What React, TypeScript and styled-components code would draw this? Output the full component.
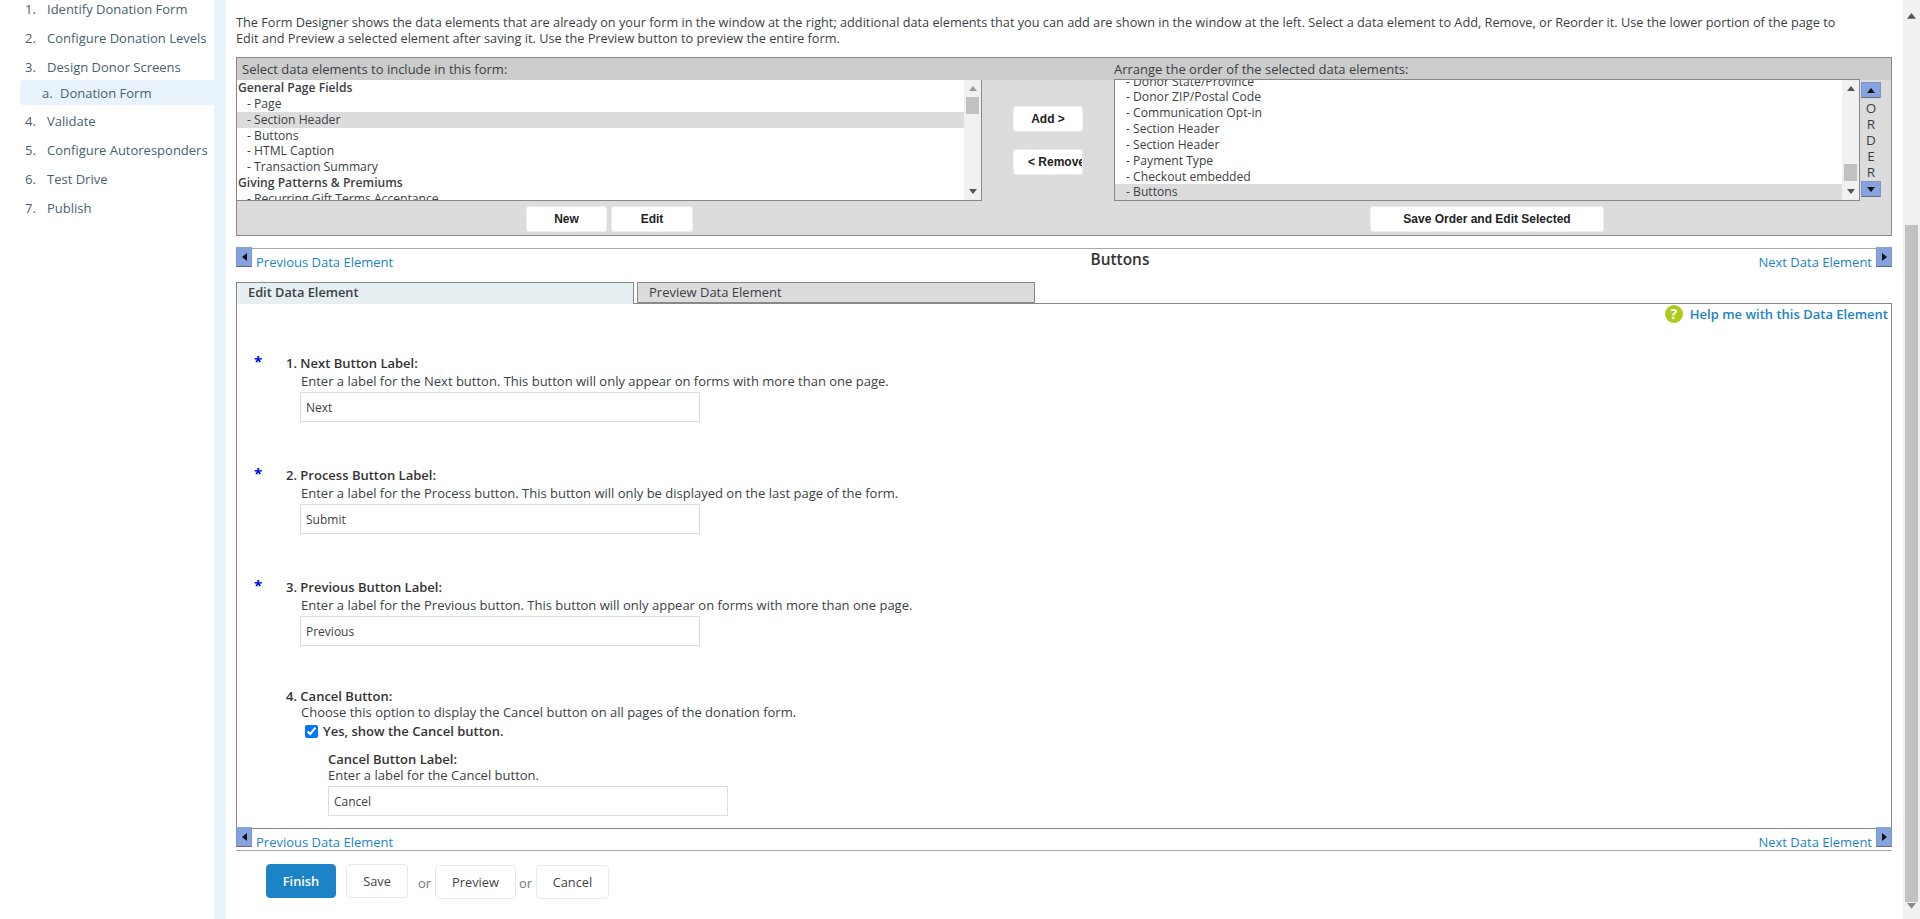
import React from "react";
import styled, { createGlobalStyle } from "styled-components";

const Global = createGlobalStyle`
  html, body { margin: 0; padding: 0; height: 100%; overflow: hidden; background: #fff; }
  body { font-family: "Open Sans", "Liberation Sans", sans-serif; font-size: 12px; color: #333; }
  * { box-sizing: border-box; }
`;

const Page = styled.div`
  display: flex;
  height: 919px;
  overflow: hidden;
`;

const Sidebar = styled.ol`
  list-style: none;
  width: 214px;
  flex: none;
  margin: -6px 0 0;
  padding: 0;
  font-size: 13px;
  color: #4a5f70;
`;

const StepItem = styled.li<{ $sub?: boolean }>`
  display: flex;
  align-items: center;
  height: ${(p) => (p.$sub ? "25px" : "29px")};
  margin: ${(p) => (p.$sub ? "-1px 0 1px 20px" : "0")};
  padding-left: ${(p) => (p.$sub ? "22px" : "25px")};
  background: ${(p) => (p.$sub ? "#e8f3fc" : "transparent")};
  border-radius: ${(p) => (p.$sub ? "4px 0 0 4px" : "0")};
  white-space: nowrap;
`;

const StepNum = styled.span<{ $sub?: boolean }>`
  width: ${(p) => (p.$sub ? "18px" : "22px")};
  flex: none;
`;

const Gutter = styled.div`
  width: 12px;
  flex: none;
  background: #e8f3fc;
`;

const Main = styled.main`
  flex: 1;
  min-width: 0;
  padding: 14px 11px 0 10px;
`;

const Intro = styled.p`
  margin: 0 0 11px;
  padding-right: 42px;
  font-size: 12.72px;
  line-height: 16px;
  color: #3a3f45;
`;

const Designer = styled.section`
  display: grid;
  grid-template-columns: 745px 132px 746px 1fr;
  grid-template-rows: 22px 121px 35px;
  height: 179px;
  border: 1px solid #888;
  background: #dcdcdc;
`;

const DesignerHead = styled.div<{ $pad?: number }>`
  grid-column: span 2;
  background: #ccc;
  font-size: 13px;
  line-height: 22px;
  padding-left: ${(p) => p.$pad ?? 5}px;
  color: #3a3f45;
`;

const ListWrap = styled.div<{ $full?: boolean }>`
  position: relative;
  height: ${(p) => (p.$full ? "122px" : "121px")};
  overflow: hidden;
  background: #fff;
  border: 1px solid #888;
  border-width: ${(p) => (p.$full ? "1px" : "0 1px 1px 0")};
  margin-top: ${(p) => (p.$full ? "-1px" : "0")};
`;

const ListBody = styled.div<{ $offset: number; $right: number }>`
  margin-top: ${(p) => p.$offset}px;
  margin-right: ${(p) => p.$right}px;
`;

const ListRow = styled.div<{ $group?: boolean; $selected?: boolean; $indent: number }>`
  height: 15.85px;
  line-height: 15.85px;
  font-size: 12.15px;
  white-space: nowrap;
  padding-left: ${(p) => (p.$group ? 1 : p.$indent)}px;
  font-weight: ${(p) => (p.$group ? 600 : 400)};
  background: ${(p) => (p.$selected ? "#dcdcdc" : "transparent")};
  color: #3a3f45;
`;

const MiniTrack = styled.div`
  position: absolute;
  top: 0;
  right: 0;
  bottom: 0;
  width: 17px;
  background: #f1f1f1;
  display: flex;
  flex-direction: column;
  align-items: center;
  justify-content: space-between;
  padding: 6px 0;
`;

const MiniThumb = styled.div<{ $top: number }>`
  position: absolute;
  left: 2px;
  right: 2px;
  top: ${(p) => p.$top}px;
  height: 17px;
  background: #c1c1c1;
`;

const MiddleCol = styled.div`
  display: flex;
  flex-direction: column;
  align-items: center;
  gap: 17px;
  padding-top: 26px;
`;

const GreyButton = styled.button<{ $w: number; $clip?: boolean }>`
  width: ${(p) => p.$w}px;
  height: 26px;
  background: #fff;
  border: 1px solid #eee;
  border-radius: 3px;
  font-family: "Liberation Sans", Arial, sans-serif;
  font-size: 12px;
  font-weight: 700;
  color: #222;
  padding: ${(p) => (p.$clip ? "0 0 0 14px" : "0")};
  white-space: nowrap;
  overflow: hidden;
  text-align: ${(p) => (p.$clip ? "left" : "center")};
`;

const OrderCol = styled.div`
  display: flex;
  flex-direction: column;
  align-items: center;
  width: 22px;
  padding-top: 2px;
`;

const OrderButton = styled.div`
  width: 20px;
  height: 16px;
  background: #86a3e0;
  border: 1px solid #7f95c6;
  border-bottom-color: #667;
  display: flex;
  align-items: center;
  justify-content: center;
  border-radius: 1px;
`;

const OrderLetters = styled.div`
  font-size: 13.5px;
  line-height: 16px;
  text-align: center;
  padding: 2px 0 1px;
  color: #3a3f45;
`;

const FooterCell = styled.div`
  display: flex;
  justify-content: center;
  gap: 4px;
  padding-top: 5px;
`;

const NavBar = styled.nav<{ $bottom?: boolean }>`
  display: grid;
  grid-template-columns: 1fr auto 1fr;
  height: ${(p) => (p.$bottom ? "23px" : "34px")};
  margin-top: ${(p) => (p.$bottom ? "0" : "12px")};
  border-top: 1px solid ${(p) => (p.$bottom ? "#888" : "#aaa")};
  border-bottom: ${(p) => (p.$bottom ? "1px solid #aaa" : "none")};
`;

const NavSide = styled.div<{ $end?: boolean }>`
  display: flex;
  justify-content: ${(p) => (p.$end ? "flex-end" : "flex-start")};
  gap: 4px;
  align-items: flex-start;
`;

const NavButton = styled.div`
  width: 16px;
  height: 20px;
  margin-top: -2px;
  background: #86a3e0;
  border-bottom: 1px solid #667;
  border-left: 1px solid #7f95c6;
  border-right: 1px solid #7f95c6;
  border-radius: 1px 1px 0 0;
  display: flex;
  align-items: flex-start;
  justify-content: center;
  padding-top: 6px;
`;

const NavLink = styled.a`
  font-size: 13px;
  line-height: 16px;
  margin-top: 5px;
  color: #1c84c6;
`;

const NavTitle = styled.h3`
  margin: 1px 0 0 112px;
  font-size: 15.4px;
  font-weight: 600;
  line-height: 20px;
  color: #333;
`;

const Tabs = styled.div`
  display: flex;
  gap: 3px;
  height: 21px;
`;

const Tab = styled.div<{ $active?: boolean }>`
  width: 398px;
  height: ${(p) => (p.$active ? "22px" : "21px")};
  padding-left: 11px;
  font-size: ${(p) => (p.$active ? "12.8px" : "13px")};
  line-height: 19px;
  font-weight: ${(p) => (p.$active ? 600 : 400)};
  background: ${(p) => (p.$active ? "#e6f0f2" : "#dcdcdc")};
  border: 1px solid #888;
  border-bottom: ${(p) => (p.$active ? "none" : "1px solid #888")};
  position: relative;
  z-index: ${(p) => (p.$active ? 1 : 0)};
  color: #3a3f45;
`;

const EditBox = styled.section`
  height: 525px;
  border: 1px solid #888;
  border-bottom: none;
  overflow: hidden;
`;

const HelpRow = styled.div`
  display: flex;
  justify-content: flex-end;
  align-items: center;
  gap: 7px;
  height: 20px;
  padding-right: 3px;
`;

const HelpDot = styled.span`
  width: 18px;
  height: 18px;
  border-radius: 50%;
  background: #aecb1c;
  color: #fff;
  font-weight: 700;
  font-size: 14px;
  line-height: 18px;
  text-align: center;
`;

const HelpLink = styled.a`
  font-size: 13px;
  font-weight: 600;
  color: #1c84c6;
`;

const Field = styled.div<{ $gap: number }>`
  position: relative;
  margin-top: ${(p) => p.$gap}px;
  padding-left: 49px;
`;

const Star = styled.span`
  position: absolute;
  left: 17px;
  top: -4px;
  font-size: 15px;
  font-weight: 700;
  line-height: 20px;
  color: #0000ee;
`;

const FieldLabel = styled.div`
  font-size: 13px;
  font-weight: 600;
  line-height: 16px;
  color: #333;
`;

const FieldHelp = styled.div<{ $tight?: boolean }>`
  margin-top: ${(p) => (p.$tight ? "0" : "2px")};
  padding-left: 15px;
  font-size: 13px;
  line-height: 16px;
  color: #3a3f45;
`;

const TextInput = styled.input`
  display: block;
  width: 400px;
  height: 30px;
  margin: 3px 0 0 14px;
  padding: 0 5px;
  border: 1px solid #ddd;
  border-radius: 0;
  font-family: "Open Sans", sans-serif;
  font-size: 12px;
  color: #3a3f45;
  background: #fff;
  outline: none;
`;

const CheckRow = styled.label`
  display: flex;
  align-items: center;
  gap: 5px;
  height: 16px;
  margin: 3px 0 0 19px;
  font-size: 13px;
  font-weight: 600;
  color: #333;
`;

const CheckBox = styled.input`
  width: 13px;
  height: 13px;
  margin: 0;
  accent-color: #0075ff;
`;

const SubField = styled.div`
  margin: 12px 0 0 42px;
`;

const SubHelp = styled.div`
  font-size: 13px;
  line-height: 16px;
  color: #3a3f45;
`;

const SubInput = styled(TextInput)`
  margin-left: 0;
`;

const ActionBar = styled.div`
  display: flex;
  align-items: flex-start;
  margin-top: 13px;
  padding-left: 30px;
`;

const ActionButton = styled.button<{ $primary?: boolean; $w: number; $low?: boolean }>`
  width: ${(p) => p.$w}px;
  height: 34px;
  margin-top: ${(p) => (p.$low ? "1px" : "0")};
  border: 1px solid ${(p) => (p.$primary ? "#1c84c6" : "#e7eaec")};
  border-radius: 4px;
  background: ${(p) => (p.$primary ? "#1c84c6" : "#fff")};
  color: ${(p) => (p.$primary ? "#fff" : "#444")};
  font-family: "Open Sans", sans-serif;
  font-size: 12.8px;
  font-weight: ${(p) => (p.$primary ? 600 : 400)};
  padding: 0;
`;

const ActionGap = styled.span`
  width: 10px;
  flex: none;
`;

const OrText = styled.span<{ $w: number }>`
  width: ${(p) => p.$w}px;
  margin-top: 11px;
  padding-left: ${(p) => (p.$w > 20 ? 10 : 3)}px;
  font-size: 13px;
  line-height: 16px;
  color: #777;
  flex: none;
`;

const PageScroll = styled.div`
  position: relative;
  width: 17px;
  flex: none;
  background: #f1f1f1;
`;

const PageThumb = styled.div`
  position: absolute;
  top: 225px;
  left: 2px;
  right: 2px;
  height: 677px;
  background: #c1c1c1;
`;

const ArrowTop = styled.div`
  position: absolute;
  top: 6px;
  left: 4px;
`;

const ArrowBottom = styled.div`
  position: absolute;
  bottom: 6px;
  left: 4px;
`;

type Dir = "up" | "down" | "left" | "right";
const points: Record<Dir, string> = {
  up: "0,5 4,0 8,5",
  down: "0,0 8,0 4,5",
  left: "5,0 5,8 0,4",
  right: "0,0 0,8 5,4",
};
const Arrow = ({ dir, color = "#555", size = 8 }: { dir: Dir; color?: string; size?: number }) => {
  const vertical = dir === "up" || dir === "down";
  const scale = size / 8;
  return (
    <svg width={(vertical ? 8 : 5) * scale} height={(vertical ? 5 : 8) * scale} viewBox={vertical ? "0 0 8 5" : "0 0 5 8"}>
      <polygon points={points[dir]} fill={color} />
    </svg>
  );
};

const steps = [
  ["1.", "Identify Donation Form"],
  ["2.", "Configure Donation Levels"],
  ["3.", "Design Donor Screens"],
];
const stepsAfter = [
  ["4.", "Validate"],
  ["5.", "Configure Autoresponders"],
  ["6.", "Test Drive"],
  ["7.", "Publish"],
];

const leftRows = [
  { t: "General Page Fields", g: true },
  { t: "- Page" },
  { t: "- Section Header", s: true },
  { t: "- Buttons" },
  { t: "- HTML Caption" },
  { t: "- Transaction Summary" },
  { t: "Giving Patterns & Premiums", g: true },
  { t: "- Recurring Gift Terms Acceptance" },
];
const rightRows = [
  { t: "- Donor State/Province" },
  { t: "- Donor ZIP/Postal Code" },
  { t: "- Communication Opt-in" },
  { t: "- Section Header" },
  { t: "- Section Header" },
  { t: "- Payment Type" },
  { t: "- Checkout embedded" },
  { t: "- Buttons", s: true },
];

const Nav = ({ bottom, title }: { bottom?: boolean; title?: string }) => (
  <NavBar $bottom={bottom}>
    <NavSide>
      <NavButton><Arrow dir="left" color="#111" /></NavButton>
      <NavLink>Previous Data Element</NavLink>
    </NavSide>
    {title ? <NavTitle>{title}</NavTitle> : <span />}
    <NavSide $end>
      <NavLink>Next Data Element</NavLink>
      <NavButton><Arrow dir="right" color="#111" /></NavButton>
    </NavSide>
  </NavBar>
);

const fields = [
  { n: "1. Next Button Label:", h: "Enter a label for the Next button. This button will only appear on forms with more than one page.", v: "Next", gap: 31 },
  { n: "2. Process Button Label:", h: "Enter a label for the Process button. This button will only be displayed on the last page of the form.", v: "Submit", gap: 45 },
  { n: "3. Previous Button Label:", h: "Enter a label for the Previous button. This button will only appear on forms with more than one page.", v: "Previous", gap: 45 },
];

export default function App() {
  return (
    <Page>
      <Global />
      <Sidebar>
        {steps.map(([n, t]) => (
          <StepItem key={n}><StepNum>{n}</StepNum>{t}</StepItem>
        ))}
        <StepItem $sub><StepNum $sub>a.</StepNum>Donation Form</StepItem>
        {stepsAfter.map(([n, t]) => (
          <StepItem key={n}><StepNum>{n}</StepNum>{t}</StepItem>
        ))}
      </Sidebar>
      <Gutter />
      <Main>
        <Intro>
          The Form Designer shows the data elements that are already on your form in the window at the right; additional data elements that you can add are shown in the window at the left. Select a data element to Add, Remove, or Reorder it. Use the lower portion of the page to Edit and Preview a selected element after saving it. Use the Preview button to preview the entire form.
        </Intro>
        <Designer>
          <DesignerHead>Select data elements to include in this form:</DesignerHead>
          <DesignerHead $pad={0}>Arrange the order of the selected data elements:</DesignerHead>

          <ListWrap>
            <ListBody $offset={0} $right={17}>
              {leftRows.map((r, i) => (
                <ListRow key={i} $group={r.g} $selected={r.s} $indent={10}>{r.t}</ListRow>
              ))}
            </ListBody>
            <MiniTrack>
              <Arrow dir="up" color="#999" />
              <MiniThumb $top={17} />
              <Arrow dir="down" color="#555" />
            </MiniTrack>
          </ListWrap>
          <MiddleCol>
            <GreyButton $w={70}>Add &gt;</GreyButton>
            <GreyButton $w={70} $clip>&lt; Remove</GreyButton>
          </MiddleCol>
          <ListWrap $full>
            <ListBody $offset={-6.5} $right={17}>
              {rightRows.map((r, i) => (
                <ListRow key={i} $selected={r.s} $indent={11}>{r.t}</ListRow>
              ))}
            </ListBody>
            <MiniTrack>
              <Arrow dir="up" color="#555" />
              <MiniThumb $top={84} />
              <Arrow dir="down" color="#555" />
            </MiniTrack>
          </ListWrap>
          <OrderCol>
            <OrderButton><Arrow dir="up" color="#111" /></OrderButton>
            <OrderLetters>O<br />R<br />D<br />E<br />R</OrderLetters>
            <OrderButton><Arrow dir="down" color="#111" /></OrderButton>
          </OrderCol>

          <FooterCell>
            <GreyButton $w={81}>New</GreyButton>
            <GreyButton $w={82}>Edit</GreyButton>
          </FooterCell>
          <span />
          <FooterCell>
            <GreyButton $w={234}>Save Order and Edit Selected</GreyButton>
          </FooterCell>
          <span />
        </Designer>

        <Nav title="Buttons" />
        <Tabs>
          <Tab $active>Edit Data Element</Tab>
          <Tab>Preview Data Element</Tab>
        </Tabs>
        <EditBox>
          <HelpRow>
            <HelpDot>?</HelpDot>
            <HelpLink>Help me with this Data Element</HelpLink>
          </HelpRow>
          {fields.map((f) => (
            <Field key={f.n} $gap={f.gap}>
              <Star>*</Star>
              <FieldLabel>{f.n}</FieldLabel>
              <FieldHelp>{f.h}</FieldHelp>
              <TextInput value={f.v} readOnly />
            </Field>
          ))}
          <Field $gap={42}>
            <FieldLabel>4. Cancel Button:</FieldLabel>
            <FieldHelp $tight>Choose this option to display the Cancel button on all pages of the donation form.</FieldHelp>
            <CheckRow>
              <CheckBox type="checkbox" checked readOnly />
              Yes, show the Cancel button.
            </CheckRow>
            <SubField>
              <FieldLabel>Cancel Button Label:</FieldLabel>
              <SubHelp>Enter a label for the Cancel button.</SubHelp>
              <SubInput value="Cancel" readOnly />
            </SubField>
          </Field>
        </EditBox>
        <Nav bottom />
        <ActionBar>
          <ActionButton $primary $w={70}>Finish</ActionButton>
          <ActionGap />
          <ActionButton $w={62}>Save</ActionButton>
          <OrText $w={27}>or</OrText>
          <ActionButton $w={81} $low>Preview</ActionButton>
          <OrText $w={20}>or</OrText>
          <ActionButton $w={73} $low>Cancel</ActionButton>
        </ActionBar>
      </Main>
      <PageScroll>
        <ArrowTop><Arrow dir="up" color="#555" size={9} /></ArrowTop>
        <PageThumb />
        <ArrowBottom><Arrow dir="down" color="#888" size={9} /></ArrowBottom>
      </PageScroll>
    </Page>
  );
}
